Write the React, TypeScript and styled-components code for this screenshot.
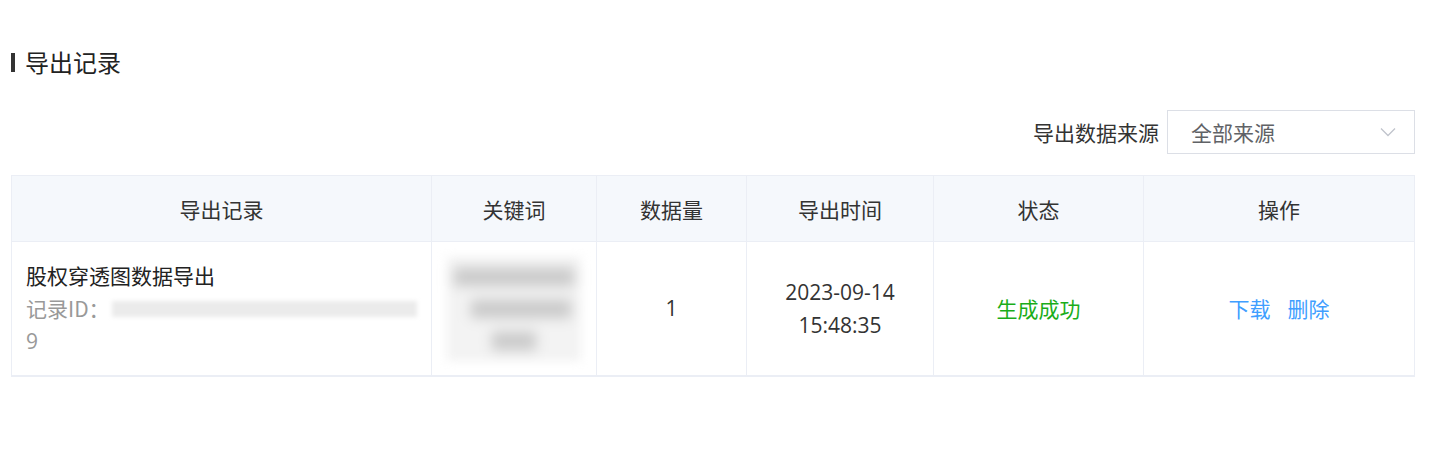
import React from "react";
import styled, { createGlobalStyle } from "styled-components";

const Global = createGlobalStyle`
  html, body { margin: 0; padding: 0; background: #fff; }
  body { font-family: "Noto Sans CJK SC", "Noto Sans", sans-serif; color: #333; }
`;

const Page = styled.div`
  padding: 46px 32px 0 11px;
  display: flex;
  flex-direction: column;
`;

const Title = styled.h2`
  margin: 0;
  display: flex;
  align-items: center;
  gap: 10px;
  font-size: 24px;
  font-weight: 400;
  line-height: 32px;
  color: #222;
  &::before {
    content: "";
    width: 4px;
    height: 19px;
    background: #333;
  }
`;

const FilterRow = styled.div`
  margin-top: 32px;
  display: flex;
  justify-content: flex-end;
  align-items: center;
  gap: 8px;
`;

const FilterLabel = styled.span`
  font-size: 21px;
  color: #333;
`;

const Select = styled.div`
  box-sizing: border-box;
  width: 248px;
  height: 44px;
  border: 1px solid #dcdfe6;
  display: flex;
  align-items: center;
  justify-content: space-between;
  padding: 0 18px 0 23px;
  font-size: 21px;
  color: #606266;
`;

const Table = styled.div`
  margin-top: 21px;
  border: 1px solid #ebeef5;
  border-bottom-width: 2px;
  display: grid;
  grid-template-columns: 420px 165px 150px 187px 210px 1fr;
`;

const HeadCell = styled.div<{ $last?: boolean }>`
  height: 65px;
  background: #f5f8fc;
  border-bottom: 1px solid #ebeef5;
  border-right: ${(p) => (p.$last ? "none" : "1px solid #ebeef5")};
  display: flex;
  align-items: center;
  justify-content: center;
  font-size: 21px;
  color: #333;
`;

const Cell = styled.div<{ $align?: "left" | "center"; $last?: boolean }>`
  height: 133px;
  box-sizing: border-box;
  border-right: ${(p) => (p.$last ? "none" : "1px solid #ebeef5")};
  display: flex;
  flex-direction: column;
  justify-content: center;
  align-items: ${(p) => (p.$align === "left" ? "flex-start" : "center")};
  padding: ${(p) => (p.$align === "left" ? "0 14px" : "0")};
  font-size: 21px;
  line-height: 33px;
  color: #333;
  text-align: center;
`;

const Digits = styled.div`
  font-family: "Open Sans", "Noto Sans CJK SC", sans-serif;
`;

const RecordName = styled.div`
  color: #222;
`;

const Muted = styled.div`
  color: #999;
  display: flex;
  align-items: center;
  width: 100%;
`;

const BlurBar = styled.span`
  display: block;
  height: 16px;
  margin-left: 2px;
  background: #ebebeb;
  filter: blur(2px);
  flex: 1;
`;

const KeywordBlur = styled.div`
  width: 134px;
  height: 104px;
  background: #f3f3f3;
  filter: blur(5px);
  display: flex;
  flex-direction: column;
  align-items: center;
  justify-content: space-around;
  padding: 4px 0;
  box-sizing: border-box;
`;

const KeywordLine = styled.span<{ $w: number; $shift?: number }>`
  display: block;
  width: ${(p) => p.$w}px;
  height: 18px;
  background: #c9c9c9;
  filter: blur(4px);
  margin-left: ${(p) => p.$shift ?? 0}px;
`;

const Status = styled.span`
  color: #1aad19;
`;

const Actions = styled.div`
  display: flex;
  gap: 17px;
`;

const Link = styled.a`
  color: #409eff;
  cursor: pointer;
  text-decoration: none;
`;

const Chevron = () => (
  <svg width="16" height="10" viewBox="0 0 16 10" fill="none">
    <path d="M1 1.5 L8 8.5 L15 1.5" stroke="#c0c4cc" strokeWidth="1.3" />
  </svg>
);

const headers = ["导出记录", "关键词", "数据量", "导出时间", "状态", "操作"];

export default function App() {
  return (
    <>
      <Global />
      <Page>
        <Title>导出记录</Title>
        <FilterRow>
          <FilterLabel>导出数据来源</FilterLabel>
          <Select>
            <span>全部来源</span>
            <Chevron />
          </Select>
        </FilterRow>
        <Table>
          {headers.map((h, i) => (
            <HeadCell key={h + i} $last={i === headers.length - 1}>
              {h}
            </HeadCell>
          ))}
          <Cell $align="left">
            <RecordName>股权穿透图数据导出</RecordName>
            <Muted>
              记录ID：
              <BlurBar />
            </Muted>
            <Muted>
              <Digits>9</Digits>
            </Muted>
          </Cell>
          <Cell>
            <KeywordBlur>
              <KeywordLine $w={120} />
              <KeywordLine $w={100} $shift={14} />
              <KeywordLine $w={44} />
            </KeywordBlur>
          </Cell>
          <Cell>
            <Digits>1</Digits>
          </Cell>
          <Cell>
            <Digits>2023-09-14</Digits>
            <Digits>15:48:35</Digits>
          </Cell>
          <Cell>
            <Status>生成成功</Status>
          </Cell>
          <Cell $last>
            <Actions>
              <Link>下载</Link>
              <Link>删除</Link>
            </Actions>
          </Cell>
        </Table>
      </Page>
    </>
  );
}
